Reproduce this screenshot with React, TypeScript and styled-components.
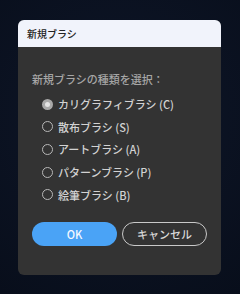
import styled, { createGlobalStyle } from 'styled-components';
import { useState } from 'react';

const GlobalStyle = createGlobalStyle`
    html, body {
        margin: 0;
        padding: 0;
        background: #0a1120;
    }
    body {
        font-family: 'Noto Sans CJK JP', 'Noto Sans', sans-serif;
    }
`;

const brushTypes = [
    { id: 'C', label: 'カリグラフィブラシ (C)' },
    { id: 'S', label: '散布ブラシ (S)' },
    { id: 'A', label: 'アートブラシ (A)' },
    { id: 'P', label: 'パターンブラシ (P)' },
    { id: 'B', label: '絵筆ブラシ (B)' },
];

const App = () => {
    const [selected, setSelected] = useState<string>('C');

    return (
        <>
            <GlobalStyle />
            <Page>
                <Dialog>
                    <Header>新規ブラシ</Header>
                    <Body>
                        <Prompt>新規ブラシの種類を選択：</Prompt>
                        <RadioList>
                            {brushTypes.map((type) => (
                                <RadioRow
                                    key={type.id}
                                    onClick={() => setSelected(type.id)}
                                >
                                    <RadioDot checked={selected === type.id} />
                                    <span>{type.label}</span>
                                </RadioRow>
                            ))}
                        </RadioList>
                        <ButtonRow>
                            <PrimaryButton>OK</PrimaryButton>
                            <OutlineButton>キャンセル</OutlineButton>
                        </ButtonRow>
                    </Body>
                </Dialog>
            </Page>
        </>
    );
};

const Page = styled.div`
    width: 240px;
    height: 294px;
    box-sizing: border-box;
    padding: 20px 0 0 18px;
    background: radial-gradient(circle at 50% 40%, #0e1628 0%, #080e1b 100%);
`;

const Dialog = styled.div`
    width: 203px;
    height: 255px;
    display: flex;
    flex-direction: column;
    background-color: #333333;
    border-radius: 6px;
    overflow: hidden;
`;

const Header = styled.div`
    height: 27px;
    display: flex;
    align-items: center;
    padding-left: 9px;
    background-color: #f1f3fb;
    color: #222;
    font-size: 10px;
    font-weight: 500;
`;

const Body = styled.div`
    display: flex;
    flex-direction: column;
    padding: 24px 14px 0 14px;
`;

const Prompt = styled.div`
    font-size: 11px;
    font-weight: 500;
    line-height: 16px;
    color: #a6a6a6;
`;

const RadioList = styled.div`
    display: flex;
    flex-direction: column;
    gap: 6.7px;
    margin-top: 9px;
    padding-left: 10px;
`;

const RadioRow = styled.label`
    display: flex;
    align-items: center;
    gap: 5px;
    height: 16px;
    font-size: 11px;
    font-weight: 500;
    color: #d2d2d2;
    cursor: pointer;
`;

const RadioDot = styled.span<{ checked: boolean }>`
    width: 11px;
    height: 11px;
    box-sizing: border-box;
    border-radius: 50%;
    border: ${(p) => (p.checked ? '3px solid #a9a9a9' : '1.3px solid #b8b8b8')};
    background-color: ${(p) => (p.checked ? '#e4e4e4' : 'transparent')};
`;

const ButtonRow = styled.div`
    display: flex;
    gap: 5px;
    margin-top: 19px;
`;

const PrimaryButton = styled.button`
    width: 85px;
    height: 24px;
    border: none;
    border-radius: 12px;
    background-color: #4aa3f6;
    color: #f4f8ff;
    font-family: inherit;
    font-size: 11px;
    font-weight: 500;
`;

const OutlineButton = styled.button`
    width: 85px;
    height: 24px;
    border: 1.5px solid #c9c9c9;
    border-radius: 12px;
    background-color: transparent;
    color: #d8d8d8;
    font-family: inherit;
    font-size: 11px;
    font-weight: 500;
`;

export default App;
